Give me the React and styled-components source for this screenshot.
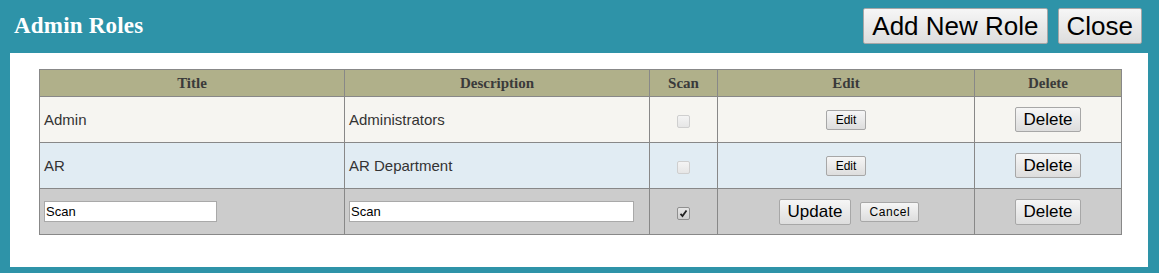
import React from 'react';
import styled, { createGlobalStyle } from 'styled-components';

const GlobalStyle = createGlobalStyle`
    html, body {
        margin: 0;
        padding: 0;
        background: #2e93a8;
    }
`;

const Page = styled.div`
    width: 1159px;
    height: 273px;
    background: #2e93a8;
    box-sizing: border-box;
`;

const TopBar = styled.div`
    height: 53px;
    display: flex;
    align-items: flex-start;
    justify-content: space-between;
    padding: 0 17px 0 14px;
    box-sizing: border-box;
`;

const Heading = styled.h2`
    margin: 14px 0 0;
    font-family: 'Liberation Serif', 'Times New Roman', serif;
    font-weight: bold;
    font-size: 23px;
    line-height: 24px;
    letter-spacing: 0.2px;
    color: #fff;
`;

const Actions = styled.div`
    display: flex;
    gap: 10px;
    margin-top: 8px;
`;

const Button = styled.button`
    font-family: 'Liberation Sans', Arial, sans-serif;
    font-size: ${p => p.$size}px;
    letter-spacing: ${p => p.$spacing || 0}px;
    height: ${p => p.$height}px;
    padding: 0 ${p => p.$pad || 7}px;
    color: #000;
    background: linear-gradient(#f6f6f6, #dddddd);
    border: 1px solid #a7a7a7;
    border-radius: 2px;
    line-height: 1;
    cursor: pointer;
    box-sizing: border-box;
`;

const Panel = styled.div`
    margin: 0 11px 0 10px;
    height: 214px;
    background: #fff;
    padding: 16px 0 0 29px;
    box-sizing: border-box;
`;

const Table = styled.table`
    width: 1082px;
    table-layout: fixed;
    border-collapse: collapse;
    border: 1px solid #888;
`;

const Th = styled.th`
    height: 26px;
    padding: 0;
    background: #b0b08a;
    border: 1px solid #888;
    font-family: 'Liberation Serif', 'Times New Roman', serif;
    font-weight: bold;
    font-size: 15px;
    color: #3a3a3a;
    text-align: center;
    vertical-align: middle;
`;

const Row = styled.tr`
    background: ${p => p.$bg};
`;

const Td = styled.td`
    height: 46px;
    padding: 0 4px;
    border: 1px solid #888;
    font-family: 'Liberation Sans', Arial, sans-serif;
    font-size: 15px;
    color: #333;
    text-align: ${p => (p.$center ? 'center' : 'left')};
    vertical-align: middle;
    box-sizing: border-box;
`;

const TextInput = styled.input`
    width: ${p => p.$width}px;
    height: 21px;
    box-sizing: border-box;
    border: 1px solid #a9a9a9;
    padding: 0 1px;
    margin: 0;
    font-family: 'Liberation Sans', Arial, sans-serif;
    font-size: 13px;
    color: #000;
    background: #fff;
    outline: none;
    display: block;
`;

const Check = styled.span`
    display: inline-flex;
    align-items: center;
    justify-content: center;
    width: 13px;
    height: 13px;
    box-sizing: border-box;
    border: 1px solid ${p => (p.$checked ? '#8f8f8f' : '#cfcfcf')};
    border-radius: 2px;
    background: ${p =>
        p.$checked
            ? 'linear-gradient(#e6e6e6, #cfcfcf)'
            : 'linear-gradient(#f4f4f4, #e6e6e6)'};
    vertical-align: middle;
`;

const EditGroup = styled.div`
    display: flex;
    justify-content: center;
    align-items: center;
    gap: 9px;
    padding-left: 6px;
`;

function Checkbox({ checked }) {
    return (
        <Check $checked={checked}>
            {checked && (
                <svg width="9" height="9" viewBox="0 0 9 9">
                    <path d="M1.5 4.8 L3.5 7 L7.5 1.5" fill="none" stroke="#222" strokeWidth="1.8" />
                </svg>
            )}
        </Check>
    );
}

const roles = [
    { title: 'Admin', description: 'Administrators', scan: false, bg: '#f6f5f1' },
    { title: 'AR', description: 'AR Department', scan: false, bg: '#e1ecf3' }
];

export default function App() {
    return (
        <Page>
            <GlobalStyle />
            <TopBar>
                <Heading>Admin Roles</Heading>
                <Actions>
                    <Button $size={26} $height={36} $pad={8}>Add New Role</Button>
                    <Button $size={26} $height={36} $pad={8}>Close</Button>
                </Actions>
            </TopBar>
            <Panel>
                <Table>
                    <colgroup>
                        <col style={{ width: 305 }} />
                        <col style={{ width: 305 }} />
                        <col style={{ width: 68 }} />
                        <col style={{ width: 257 }} />
                        <col style={{ width: 147 }} />
                    </colgroup>
                    <thead>
                        <tr>
                            <Th>Title</Th>
                            <Th>Description</Th>
                            <Th>Scan</Th>
                            <Th>Edit</Th>
                            <Th>Delete</Th>
                        </tr>
                    </thead>
                    <tbody>
                        {roles.map(role => (
                            <Row key={role.title} $bg={role.bg}>
                                <Td>{role.title}</Td>
                                <Td>{role.description}</Td>
                                <Td $center>
                                    <Checkbox checked={role.scan} />
                                </Td>
                                <Td $center>
                                    <Button $size={12} $height={20} $pad={9}>Edit</Button>
                                </Td>
                                <Td $center>
                                    <Button $size={17} $height={25} $pad={7}>Delete</Button>
                                </Td>
                            </Row>
                        ))}
                        <Row $bg="#cccccc">
                            <Td>
                                <TextInput $width={173} defaultValue="Scan" />
                            </Td>
                            <Td>
                                <TextInput $width={285} defaultValue="Scan" />
                            </Td>
                            <Td $center>
                                <Checkbox checked />
                            </Td>
                            <Td $center>
                                <EditGroup>
                                    <Button $size={17} $height={26} $pad={8}>Update</Button>
                                    <Button $size={12} $height={20} $pad={8} $spacing={0.6}>Cancel</Button>
                                </EditGroup>
                            </Td>
                            <Td $center>
                                <Button $size={17} $height={26} $pad={7}>Delete</Button>
                            </Td>
                        </Row>
                    </tbody>
                </Table>
            </Panel>
        </Page>
    );
}
